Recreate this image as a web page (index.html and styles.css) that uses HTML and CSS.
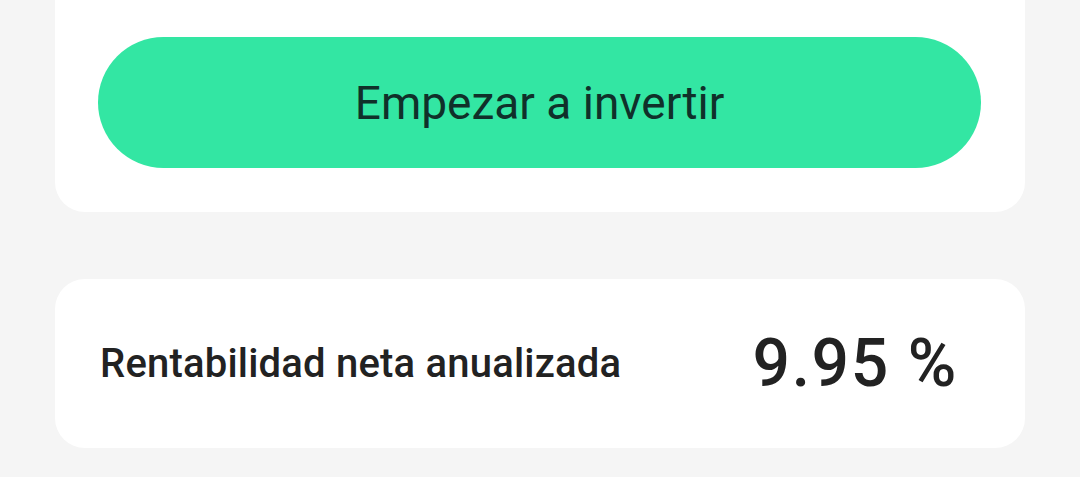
FILE: index.html
```html
<!DOCTYPE html>
<html lang="es">
<head>
  <meta charset="UTF-8">
  <meta name="viewport" content="width=device-width, initial-scale=1.0">
  <title>Invertir</title>
  <link rel="stylesheet" href="styles.css">
</head>
<body>
  <div class="page">
    <div class="card card-action">
      <button class="button">Empezar a invertir</button>
    </div>

    <div class="card card-stat">
      <p class="stat-label">Rentabilidad neta anualizada</p>
      <p class="stat-value">9.95 %</p>
    </div>
  </div>
</body>
</html>
```

FILE: styles.css
```css
body {
  margin: 0;
  padding: 0;
  background: #f5f5f5;
  font-family: Roboto, 'Noto Sans', sans-serif;
}

.page {
  display: flex;
  flex-direction: column;
  gap: 67px;
  padding: 0 55px;
}

.card {
  background: #fff;
  border-radius: 30px;
}

.card-action {
  border-radius: 0 0 30px 30px;
  padding: 37px 44px 44px 43px;
}

.button {
  display: block;
  width: 100%;
  height: 131px;
  border: none;
  border-radius: 66px;
  background: #33e6a3;
  color: #10302a;
  font-family: inherit;
  font-size: 46px;
  font-weight: 400;
  cursor: pointer;
}

.card-stat {
  height: 169px;
  display: flex;
  align-items: center;
  justify-content: space-between;
  padding: 0 67px 0 45px;
}

.card-stat p {
  margin: 0;
  color: #222;
}

.stat-label {
  font-size: 40px;
  font-weight: 500;
  letter-spacing: 0.2px;
}

.stat-value {
  font-size: 66px;
  font-weight: 500;
  letter-spacing: 1.6px;
}
```
